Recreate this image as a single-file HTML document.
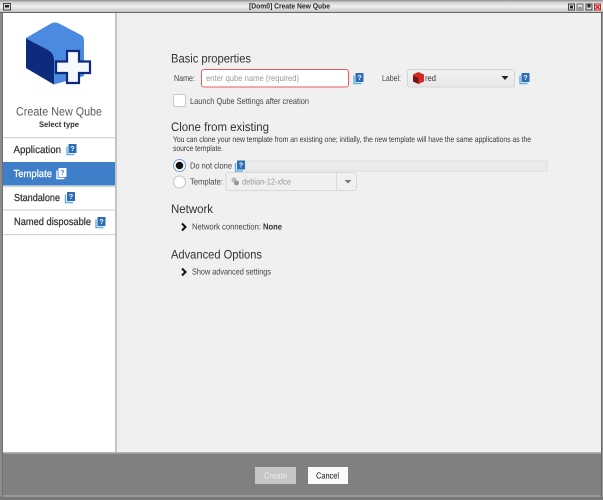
<!DOCTYPE html>
<html><head><meta charset="utf-8"><style>
html,body{margin:0;padding:0;width:603px;height:500px;overflow:hidden;background:#808080}
svg{position:absolute;left:0;top:0;display:block}
text{font-family:"Liberation Sans",sans-serif;text-rendering:geometricPrecision;fill:#444;font-size:8.700px}
.h{font-size:12.300px;fill:#333}
.s{font-size:10.300px;fill:#333;stroke:#333;stroke-width:.25px}
</style></head><body>
<svg width="603" height="500" viewBox="0 0 603 500">
<defs>
<linearGradient id="tb" x1="0" y1="0" x2="0" y2="1"><stop offset="0" stop-color="#8f8f8f"/><stop offset=".22" stop-color="#d8d8d8"/><stop offset=".55" stop-color="#efefef"/><stop offset="1" stop-color="#c4c4c4"/></linearGradient>
<linearGradient id="cb" x1="0" y1="0" x2="0" y2="1"><stop offset="0" stop-color="#f2f2f2"/><stop offset="1" stop-color="#e7e7e7"/></linearGradient>
<g id="q"><path d="M1 2.500V10.500H8.500" fill="none" stroke="#62aeea" stroke-width="1.400"/><rect x="2.500" y="0" width="8" height="9" fill="#2f6db5"/><text x="6.500" y="7" style="font-size:7px;font-weight:bold;fill:#fff" text-anchor="middle">?</text></g>
<g id="qw"><path d="M1 2.500V10.500H8.500" fill="none" stroke="#fff" stroke-width="1.400"/><rect x="2.500" y="0" width="8" height="9" fill="#fff"/><text x="6.500" y="7" style="font-size:7px;font-weight:bold;fill:#3f7ec9" text-anchor="middle">?</text></g>
</defs>

<!-- frame -->
<rect width="603" height="500" fill="#8c8c8c"/>
<rect x="0" y="0" width="603" height="12" fill="url(#tb)"/>
<rect x="0" y="12" width="603" height="1" fill="#666"/>
<rect x="2" y="13" width="1" height="484" fill="#707070"/>
<rect x="601" y="13" width="1" height="484" fill="#666"/>
<rect x="602" y="13" width="1" height="487" fill="#999"/>

<!-- titlebar -->
<text x="249" y="8.500" textLength="81" lengthAdjust="spacingAndGlyphs" style="font-size:7.500px;font-weight:bold;fill:#222">[Dom0] Create New Qube</text>
<rect x="3.500" y="3.500" width="7" height="6.500" fill="#ddd" stroke="#444"/><rect x="5" y="5" width="4" height="2.500" fill="#222"/>
<rect x="568.500" y="4" width="6" height="6" fill="#ddd" stroke="#444"/><rect x="570" y="5.500" width="3" height="3" fill="#222"/>
<rect x="577" y="4" width="6" height="6" fill="#ddd" stroke="#666"/><rect x="578.500" y="7.500" width="3" height="1" fill="#222"/>
<rect x="586" y="4" width="6" height="6" fill="#ddd" stroke="#444"/><rect x="587.500" y="4.500" width="3" height="3" fill="#222"/>
<rect x="594.500" y="4" width="6" height="6" fill="#eee" stroke="#a33"/><path d="M595.500 5L599.500 9M599.500 5L595.500 9" stroke="#d22" stroke-width="1.500"/>

<!-- panels -->
<rect x="3" y="13" width="112" height="440" fill="#fff"/>
<rect x="115" y="13" width="2" height="440" fill="#c4c4c4"/>
<rect x="117" y="13" width="484" height="440" fill="#f0f0f0"/>

<!-- logo -->
<path d="M26 38L51 23.500Q55 21.500 59 23.500L81 35Q84 37 84 40V76L54 84.500L26 68Z" fill="#4a8ae0"/>
<path d="M26 38.500L48 50Q54 53.500 54 60V84.500L26 68Z" fill="#0e2a7c"/>
<path d="M67 51H79V61.500H90V73H79V83H67V73H56V61.500H67Z" fill="#f6f8fc" stroke="#0e2a7c" stroke-width="2.200"/>
<text x="16" y="115.500" textLength="86" lengthAdjust="spacingAndGlyphs" style="font-size:12px;fill:#5a5a5a">Create New Qube</text>
<text x="39" y="127" textLength="40" lengthAdjust="spacingAndGlyphs" style="font-size:8px;font-weight:bold;fill:#333">Select type</text>

<!-- sidebar -->
<rect x="3" y="137" width="112" height="1.200" fill="#d6d6d6"/>
<text class="s" x="13.500" y="153" textLength="47.500" lengthAdjust="spacingAndGlyphs">Application</text>
<use href="#q" x="66" y="144"/>
<rect x="3" y="162" width="112" height="23.500" fill="#3f7ec9"/>
<text class="s" x="13.500" y="177" textLength="38.500" lengthAdjust="spacingAndGlyphs" style="fill:#fff;stroke:#fff">Template</text>
<use href="#qw" x="56" y="168"/>
<rect x="3" y="186" width="112" height="1.200" fill="#d6d6d6"/>
<text class="s" x="14" y="201" textLength="46" lengthAdjust="spacingAndGlyphs">Standalone</text>
<use href="#q" x="64.500" y="192"/>
<rect x="3" y="209.500" width="112" height="1.200" fill="#d6d6d6"/>
<text class="s" x="14" y="225" textLength="77" lengthAdjust="spacingAndGlyphs">Named disposable</text>
<use href="#q" x="95" y="217"/>
<rect x="3" y="234" width="112" height="1.200" fill="#d6d6d6"/>

<!-- basic properties -->
<text class="h" x="171" y="62.500" textLength="80" lengthAdjust="spacingAndGlyphs">Basic properties</text>
<text x="174" y="81" textLength="21" lengthAdjust="spacingAndGlyphs">Name:</text>
<rect x="201.500" y="69.500" width="147" height="17.500" rx="2.500" fill="#fff" stroke="#ee5a5f"/>
<text x="206" y="81" textLength="93" lengthAdjust="spacingAndGlyphs" style="fill:#999">enter qube name (required)</text>
<use href="#q" x="353" y="73"/>
<text x="382" y="81" textLength="19" lengthAdjust="spacingAndGlyphs">Label:</text>
<rect x="407.500" y="69.500" width="107" height="17.500" rx="2.500" fill="url(#cb)" stroke="#d4d4d4"/>
<path d="M418.500 72L424 74.500V81.500L418.500 84L413 81.500V74.500Z" fill="#d42a25"/>
<path d="M413 75.500L418.500 78V84L413 81.500Z" fill="#701512"/>
<text x="425" y="81" textLength="11" lengthAdjust="spacingAndGlyphs" style="fill:#333">red</text>
<path d="M501.500 76H508.500L505 80Z" fill="#222"/>
<use href="#q" x="519" y="73"/>

<rect x="173.500" y="94.500" width="12" height="12" rx="1.500" fill="#fff" stroke="#c8c8c8"/>
<text x="190" y="104" textLength="119" lengthAdjust="spacingAndGlyphs">Launch Qube Settings after creation</text>

<!-- clone -->
<text class="h" x="171" y="131" textLength="98" lengthAdjust="spacingAndGlyphs">Clone from existing</text>
<text x="173" y="142" textLength="358" lengthAdjust="spacingAndGlyphs" style="font-size:8.200px;fill:#3a3a3a">You can clone your new template from an existing one; initially, the new template will have the same applications as the</text>
<text x="173" y="151" textLength="50" lengthAdjust="spacingAndGlyphs" style="font-size:8.200px;fill:#3a3a3a">source template.</text>
<rect x="246" y="161" width="301" height="10" rx="1" fill="#ebebeb" stroke="#dcdcdc"/>
<circle cx="179.500" cy="165.500" r="6" fill="#fff" stroke="#6a9fd8"/>
<circle cx="179.500" cy="165.500" r="3.800" fill="#111"/>
<text x="190" y="168.500" textLength="42" lengthAdjust="spacingAndGlyphs">Do not clone</text>
<use href="#q" x="234.500" y="160.500"/>
<circle cx="179.500" cy="182" r="6" fill="#fff" stroke="#c4c4c4"/>
<text x="190" y="184.500" textLength="33" lengthAdjust="spacingAndGlyphs">Template:</text>
<rect x="226" y="172.500" width="130.500" height="18" rx="2.500" fill="#f0f0f0" stroke="#d8d8d8"/>
<rect x="336" y="173" width="1" height="17" fill="#d8d8d8"/>
<circle cx="234" cy="180" r="2.500" fill="#bbb"/><circle cx="236.500" cy="183" r="2.500" fill="#999"/>
<text x="242" y="184.500" textLength="49" lengthAdjust="spacingAndGlyphs" style="fill:#999">debian-12-xfce</text>
<path d="M344.500 180H351.500L348 183.500Z" fill="#777"/>

<!-- network -->
<text class="h" x="171" y="213" textLength="42" lengthAdjust="spacingAndGlyphs">Network</text>
<path d="M182 223.500L185.500 227L182 230.500" fill="none" stroke="#111" stroke-width="2"/>
<text x="192" y="229.500" textLength="69" lengthAdjust="spacingAndGlyphs">Network connection:</text>
<text x="263" y="229.500" textLength="19" lengthAdjust="spacingAndGlyphs" style="font-weight:bold;fill:#333">None</text>

<text class="h" x="171" y="258.500" textLength="91" lengthAdjust="spacingAndGlyphs">Advanced Options</text>
<path d="M182 268.500L185.500 272L182 275.500" fill="none" stroke="#111" stroke-width="2"/>
<text x="192" y="274.500" textLength="79" lengthAdjust="spacingAndGlyphs">Show advanced settings</text>

<!-- footer -->
<rect x="3" y="453" width="598" height="42" fill="#808080"/>
<rect x="3" y="452" width="598" height="1.500" fill="#b4b4b4"/>
<rect x="3" y="495.500" width="598" height="1" fill="#a8a8a8"/>
<rect x="0" y="497" width="603" height="3" fill="#777"/>
<rect x="255" y="467" width="41" height="17" fill="#c6c6c6"/>
<text x="264" y="478.500" textLength="23" lengthAdjust="spacingAndGlyphs" style="fill:#eee">Create</text>
<rect x="308" y="467" width="40" height="17" fill="#fafafa"/>
<text x="316" y="478.500" textLength="23" lengthAdjust="spacingAndGlyphs" style="fill:#111">Cancel</text>
</svg>
</body></html>
